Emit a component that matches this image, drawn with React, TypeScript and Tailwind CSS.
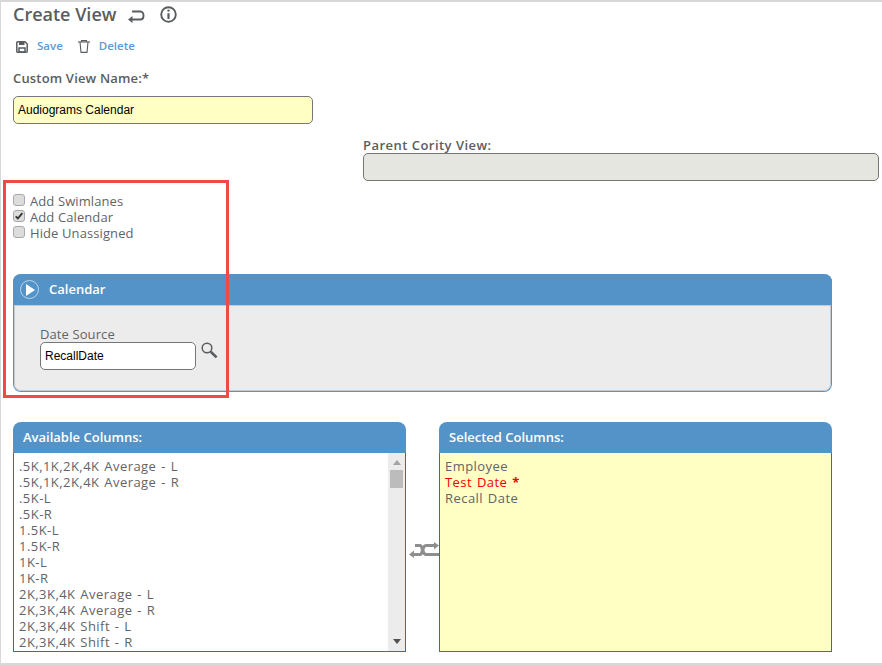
import React from 'react';

const availableColumns = [
  '.5K,1K,2K,4K Average - L',
  '.5K,1K,2K,4K Average - R',
  '.5K-L',
  '.5K-R',
  '1.5K-L',
  '1.5K-R',
  '1K-L',
  '1K-R',
  '2K,3K,4K Average - L',
  '2K,3K,4K Average - R',
  '2K,3K,4K Shift - L',
  '2K,3K,4K Shift - R',
];

const font = "font-['Open_Sans','Noto_Sans',sans-serif]";

function CheckRow({ label, checked }: { label: string; checked?: boolean }) {
  return (
    <div className="flex h-4 items-center">
      <span className="mb-[2px] flex h-[12px] w-[12px] items-center justify-center rounded-[3px] border border-[#a9a9a9] bg-[#dcdcdc]">
        {checked && (
          <svg viewBox="0 0 12 12" className="h-[10px] w-[10px]">
            <path d="M2 6.5 L4.6 9 L10 2.5" fill="none" stroke="#333" strokeWidth="2.2" />
          </svg>
        )}
      </span>
      <span className="ml-[5px] text-[13px] leading-4 tracking-[0.1px] text-[#5f6468]">{label}</span>
    </div>
  );
}

function PanelHeader({ title }: { title: string }) {
  return (
    <div className="flex h-[31px] items-center rounded-t-[8px] bg-[#5493c7] pl-[10px] text-[13px] font-semibold text-white">
      {title}
    </div>
  );
}

export default function App() {
  return (
    <div className={`${font} relative h-[665px] w-[882px] overflow-hidden border-t-2 border-b-2 border-l border-[#d8d8d8] bg-white`}>
      <div className="pl-[12px]">
        {/* Title */}
        <div className="flex h-[24px] items-center">
          <h1 className="text-[18px] font-semibold leading-6 text-[#5a5d60]">Create View</h1>
          <svg viewBox="0 0 17 14" className="ml-[12px] mt-[3px] h-[14px] w-[17px]" fill="none" stroke="#5a5d60" strokeWidth="1.9">
            <path d="M3 10.5 H12.5 C16.5 10.5 16.5 2.5 12.5 2.5 H4" />
            <path d="M0 10.5 L4.5 7 V14 Z" fill="#5a5d60" stroke="none" />
          </svg>
          <svg viewBox="0 0 17 17" className="ml-[15px] h-[17px] w-[17px]" fill="none" stroke="#5a5d60" strokeWidth="1.9">
            <circle cx="8.5" cy="8.5" r="7.3" />
            <path d="M8.5 7.2 V13" strokeWidth="2.2" />
            <circle cx="8.5" cy="4.6" r="1.2" fill="#5a5d60" stroke="none" />
          </svg>
        </div>

        {/* Toolbar */}
        <div className="mt-[10px] flex h-[20px] items-center pl-[3px] text-[11.5px] font-semibold text-[#5b9bd5]">
          <svg viewBox="0 0 12 12" className="mt-[1px] h-[12px] w-[12px]" fill="none" stroke="#5a5d60" strokeWidth="1.5">
            <path d="M.8 1.8 A1 1 0 0 1 1.8 .8 H9 L11.2 3 V10.2 A1 1 0 0 1 10.2 11.2 H1.8 A1 1 0 0 1 .8 10.2 Z" />
            <path d="M3 7 H9 V11 H3 Z" />
            <path d="M3 1 H8.5 V4 H3 Z" fill="#5a5d60" stroke="none" />
          </svg>
          <span className="ml-[9px]">Save</span>
          <svg viewBox="0 0 12 13" className="ml-[15px] h-[13px] w-[12px]" fill="none" stroke="#5a5d60" strokeWidth="1.1">
            <path d="M0 2 H12" />
            <path d="M3.5 2 V.6 H8.5 V2" />
            <path d="M2 2 L3 12.4 H9 L10 2" />
          </svg>
          <span className="ml-[9px]">Delete</span>
        </div>

        <div className="mt-[14px] text-[13px] font-semibold leading-4 tracking-[0.17px] text-[#5a5d60]">Custom View Name:*</div>

        <div className="mt-[10px] flex h-[28px] w-[300px] items-center rounded-[5px] border border-[#767676] bg-[#ffffc4] pl-[4px] font-['Liberation_Sans',sans-serif] text-[12px] text-black">
          Audiograms Calendar
        </div>

        {/* Parent view */}
        <div className="ml-[350px] mt-[13px] text-[13px] font-semibold leading-4 tracking-[0.47px] text-[#5a5d60]">Parent Cority View:</div>
        <div className="ml-[350px] h-[28px] w-[516px] rounded-[5px] border border-[#767676] bg-[#e6e6e0]" />

        {/* Options */}
        <div className="mt-[12px] flex flex-col">
          <CheckRow label="Add Swimlanes" />
          <CheckRow label="Add Calendar" checked />
          <CheckRow label="Hide Unassigned" />
        </div>

        {/* Calendar panel */}
        <div className="mt-[33px] w-[819px] rounded-[8px] border-b border-l border-r border-[#5493c7] bg-[#ececec]">
          <div className="-mx-px flex h-[31px] items-center rounded-t-[8px] bg-[#5493c7] pl-[7px] text-[13px] font-semibold text-white">
            <span className="flex h-[19px] w-[19px] items-center justify-center rounded-full border border-[#b9d3e9]">
              <svg viewBox="0 0 9 12" className="ml-[1px] h-[12px] w-[9px]">
                <path d="M0 0 L9 6 L0 12 Z" fill="#fff" />
              </svg>
            </span>
            <span className="ml-[10px]">Calendar</span>
          </div>
          <div className="h-[86px] rounded-b-[7px] border-b border-l border-r border-t border-[#c9c9c9] pl-[25px] pt-[20px]">
            <div className="text-[13px] leading-4 tracking-[0.1px] text-[#5f6468]">Date Source</div>
            <div className="flex items-start">
              <div className="flex h-[28px] w-[156px] items-center rounded-[5px] border border-[#767676] bg-white pl-[4px] font-['Liberation_Sans',sans-serif] text-[12px] text-black">
                RecallDate
              </div>
              <svg viewBox="0 0 17 17" className="ml-[5px] h-[17px] w-[17px]" fill="none" stroke="#5a5d60">
                <circle cx="6" cy="6" r="4.8" strokeWidth="1.5" />
                <path d="M9.8 9.8 L15.6 15.4" strokeWidth="2.6" />
              </svg>
            </div>
          </div>
        </div>

        {/* Column pickers */}
        <div className="mt-[30px] flex items-stretch">
          <div className="w-[393px]">
            <PanelHeader title="Available Columns:" />
            <div className="flex h-[199px] border-b border-l border-r border-[#3f6d92] bg-white">
              <div className="flex-1 pl-[5px] pt-[5px] text-[13px] leading-4 tracking-[0.45px] text-[#5f6468] [word-spacing:1px]">
                {availableColumns.map((c) => (
                  <div key={c} className="whitespace-nowrap">{c}</div>
                ))}
              </div>
              <div className="flex w-[17px] flex-col items-center bg-[#ececec]">
                <div className="mt-[7px] h-0 w-0 border-x-[4px] border-b-[5px] border-x-transparent border-b-[#a3a3a3]" />
                <div className="mt-[5px] h-[18px] w-[13px] bg-[#bcbcbc]" />
                <div className="mb-[7px] mt-auto h-0 w-0 border-x-[4px] border-t-[5px] border-x-transparent border-t-[#505050]" />
              </div>
            </div>
          </div>

          <div className="flex w-[33px] items-center justify-end pt-[26px]">
            <svg viewBox="0 0 30 16" className="h-[16px] w-[30px]" fill="none" stroke="#8e8e8e" strokeWidth="3.2">
              <path d="M4 12.5 H11 C14 12.5 13 3.5 17 3.5 H28" />
              <path d="M6 3.5 H11 C14 3.5 13 12.5 17 12.5 H30" />
              <path d="M0 12.5 L5 8.5 V16 Z" fill="#8e8e8e" stroke="none" />
              <path d="M30 3.5 L25 0 V7.5 Z" fill="#8e8e8e" stroke="none" />
            </svg>
          </div>

          <div className="w-[393px]">
            <PanelHeader title="Selected Columns:" />
            <div className="h-[199px] border-b border-l border-r border-[#3f6d92] bg-[#ffffc4] pl-[5px] pt-[5px] text-[13px] leading-4 tracking-[0.45px] text-[#5f6468] [word-spacing:1px]">
              <div>Employee</div>
              <div className="text-[#f00000]">Test Date <span className="font-bold">*</span></div>
              <div>Recall Date</div>
            </div>
          </div>
        </div>
      </div>

      {/* Highlight drawn over the screenshot */}
      <div className="pointer-events-none absolute left-[2px] top-[178px] h-[218px] w-[226px] border-[3px] border-[#ef4a45]" />
    </div>
  );
}
